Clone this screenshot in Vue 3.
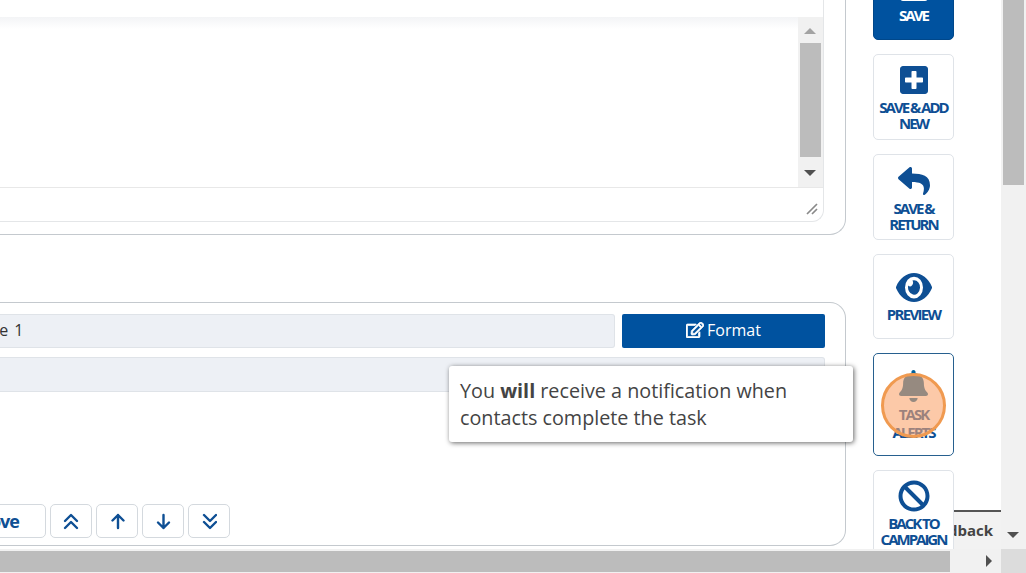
<template>
  <div class="page">
    <div class="viewport">
      <div class="content">
        <div class="main">
          <section class="panel panel-top">
            <div class="editor">
              <div class="toolbar"></div>
              <div class="editor-body">
                <div class="editor-text"></div>
                <div class="scrollbar">
                  <span class="tri tri-up tri-off"></span>
                  <div class="scroll-thumb"></div>
                  <span class="tri tri-down"></span>
                </div>
              </div>
              <div class="status">
                <svg class="grip" viewBox="0 0 12 12" width="12" height="12">
                  <path d="M1 11 11 1M6 11l5-5" stroke="#8a8a8a" stroke-width="1.7" fill="none" />
                </svg>
              </div>
            </div>
          </section>

          <section class="panel panel-bottom">
            <div class="name-row">
              <div class="field"><span class="field-text">Page 1</span></div>
              <button class="format-btn">
                <svg class="format-icon" viewBox="0 0 576 512" width="18" height="16">
                  <path :d="icons.edit" fill="#fff" stroke="#fff" stroke-width="22" />
                </svg>
                Format
              </button>
            </div>
            <div class="field field-wide"></div>
            <div class="move-row">
              <button class="move-btn text-btn">Remove</button>
              <button v-for="m in moves" :key="m.name" class="move-btn">
                <svg viewBox="0 0 16 18" width="16" height="18">
                  <path :d="m.d" fill="none" stroke="#0e4f94" stroke-width="2.4" stroke-linecap="round" stroke-linejoin="round" />
                </svg>
              </button>
            </div>
          </section>
        </div>

        <aside class="side">
          <button
            v-for="a in actions"
            :key="a.label"
            class="action"
            :class="a.cls"
          >
            <svg :viewBox="a.box" :width="a.w" :height="a.h" class="action-icon" preserveAspectRatio="none">
              <path :d="a.d" fill="currentColor" />
            </svg>
            <span class="action-label">{{ a.label }}</span>
          </button>
        </aside>
      </div>

      <div class="feedback">Feedback</div>

      <div class="vscroll">
        <div class="vthumb"></div>
        <span class="tri tri-down page-down"></span>
      </div>
    </div>

    <div class="hscroll">
      <div class="hthumb"></div>
      <span class="tri-right"></span>
      <div class="corner"></div>
    </div>

    <div class="tooltip">You <b>will</b> receive a notification when contacts complete the task</div>
    <div class="spot"></div>
  </div>
</template>

<script setup>
const icons = {
  edit: 'M402.3 344.9l32-32c5-5 13.7-1.5 13.7 5.7V464c0 26.5-21.5 48-48 48H48c-26.5 0-48-21.5-48-48V112c0-26.5 21.5-48 48-48h273.5c7.1 0 10.7 8.6 5.7 13.7l-32 32c-1.5 1.5-3.5 2.3-5.7 2.3H48v352h352V350.5c0-2.1.8-4.1 2.3-5.6zm156.6-201.8L296.3 405.7l-90.4 10c-26.2 2.9-48.5-19.2-45.6-45.6l10-90.4L432.9 17.1c22.9-22.9 59.9-22.9 82.7 0l43.2 43.2c22.9 22.9 22.9 60 .1 82.8zM460.1 174L402 115.9 216.2 301.8l-7.3 65.3 65.3-7.3L460.1 174zm64.8-79.7l-43.2-43.2c-4.1-4.1-10.8-4.1-14.8 0L436 82l58.1 58.1 30.9-30.9c4-4.2 4-10.8-.1-14.9z',
}

const moves = [
  { name: 'top', d: 'M2 9l6-6 6 6M2 16l6-6 6 6' },
  { name: 'up', d: 'M9 16V3M3.500 8.500 9 3l5.500 5.500' },
  { name: 'down', d: 'M8.500 3v13M3 10.500 8.500 16 14 10.500' },
  { name: 'bottom', d: 'M3 3l6 6 6-6M3 10l6 6 6-6' },
]

const actions = [
  {
    label: 'SAVE',
    cls: 'action-save',
    box: '0 0 448 512',
    w: 28,
    h: 32,
    d: 'M48 32h352c26.500 0 48 21.500 48 48v352c0 26.500-21.500 48-48 48H48c-26.500 0-48-21.500-48-48V80c0-26.500 21.500-48 48-48z',
  },
  {
    label: 'SAVE & ADD NEW',
    cls: 'action-add',
    box: '0 0 448 512',
    w: 28,
    h: 32,
    d: 'M400 32H48C21.500 32 0 53.500 0 80v352c0 26.500 21.500 48 48 48h352c26.500 0 48-21.500 48-48V80c0-26.500-21.500-48-48-48zm-32 252c0 6.600-5.400 12-12 12h-92v92c0 6.600-5.400 12-12 12h-56c-6.600 0-12-5.400-12-12v-92H92c-6.600 0-12-5.400-12-12v-56c0-6.600 5.400-12 12-12h92v-92c0-6.600 5.400-12 12-12h56c6.600 0 12 5.400 12 12v92h92c6.600 0 12 5.400 12 12v56z',
  },
  {
    label: 'SAVE & RETURN',
    cls: 'action-return',
    box: '0 0 512 512',
    w: 32,
    h: 32,
    d: 'M8.309 189.836L184.313 37.851C199.719 24.546 224 35.347 224 56.015v80.053c160.629 1.839 288 34.032 288 186.258 0 61.441-39.581 122.309-83.333 154.132-13.653 9.931-33.111-2.533-28.077-18.631 45.344-145.012-21.507-183.510-176.590-185.742V360c0 20.700-24.300 31.453-39.687 18.164l-176.004-152c-11.071-9.562-11.086-26.753 0-36.328z',
  },
  {
    label: 'PREVIEW',
    cls: 'action-preview',
    box: '0 64 576 384',
    w: 36,
    h: 29,
    d: 'M572.520 241.400C518.290 135.590 410.930 64 288 64S57.680 135.640 3.480 241.410a32.350 32.350 0 0 0 0 29.190C57.710 376.410 165.070 448 288 448s230.320-71.640 284.520-177.410a32.350 32.350 0 0 0 0-29.190zM288 400a144 144 0 1 1 144-144 143.930 143.930 0 0 1-144 144zm0-240a95.310 95.310 0 0 0-25.310 3.790 47.850 47.850 0 0 1-66.900 66.900A95.780 95.780 0 1 0 288 160z',
  },
  {
    label: 'TASK ALERTS',
    cls: 'action-active',
    box: '0 0 448 512',
    w: 29,
    h: 32,
    d: 'M224 512c35.320 0 63.970-28.650 63.970-64H160.030c0 35.350 28.650 64 63.970 64zm215.390-149.710c-19.320-20.760-55.470-51.990-55.470-154.290 0-77.700-54.480-139.900-127.940-155.160V32c0-17.670-14.320-32-31.980-32s-31.980 14.330-31.980 32v20.840C118.560 68.100 64.080 130.300 64.080 208c0 102.300-36.150 133.530-55.470 154.290-6 6.450-8.660 14.160-8.610 21.710.11 16.400 12.980 32 32.100 32h383.800c19.120 0 32-15.600 32.100-32 .05-7.550-2.610-15.270-8.610-21.710z',
  },
  {
    label: 'BACK TO CAMPAIGN',
    cls: 'action-back',
    box: '0 0 512 512',
    w: 32,
    h: 32,
    d: 'M256 8C119.034 8 8 119.033 8 256s111.034 248 248 248 248-111.034 248-248S392.967 8 256 8zm130.108 117.892c65.448 65.448 70 165.481 20.677 235.637L150.470 105.216c70.204-49.356 170.226-44.735 235.638 20.676zM125.892 386.108c-65.448-65.448-70-165.481-20.677-235.637L361.530 406.784c-70.203 49.356-170.226 44.736-235.638-20.676z',
  },
]
</script>

<style>
html,
body {
  margin: 0;
  overflow: hidden;
}
</style>

<style scoped>
.page {
  position: relative;
  width: 1026px;
  height: 573px;
  overflow: hidden;
  background: #fff;
  font-family: "Open Sans", sans-serif;
  display: flex;
  flex-direction: column;
}

button {
  font-family: inherit;
  cursor: pointer;
}

.viewport {
  position: relative;
  height: 549px;
  display: flex;
  overflow: hidden;
}

.content {
  width: 1001px;
  display: flex;
}

.main {
  width: 846px;
  flex: none;
}

.panel {
  box-sizing: border-box;
  background: #fff;
  border: 1px solid #c4c9ce;
  border-left: none;
}

.panel-top {
  height: 235px;
  border-top: none;
  border-bottom-right-radius: 16px;
  padding-right: 21px;
}

.editor {
  box-sizing: border-box;
  height: 222px;
  border-right: 1px solid #e4e6e8;
  border-bottom: 1px solid #e4e6e8;
  border-bottom-right-radius: 12px;
  display: flex;
  flex-direction: column;
}

.toolbar {
  box-sizing: border-box;
  height: 18px;
  flex: none;
  border-bottom: 1px solid #f0f0f0;
  margin-bottom: -1px;
}

.editor-body {
  height: 170px;
  flex: none;
  display: flex;
}

.editor-text {
  flex: 1;
  background: linear-gradient(#f3f4f6, #fff 12px);
}

.scrollbar {
  width: 25px;
  background: #f1f1f1;
  box-sizing: border-box;
  padding: 11px 3px 0 2px;
  display: flex;
  flex-direction: column;
  align-items: center;
}

.scroll-thumb {
  width: 21px;
  height: 114px;
  margin: 9px 0 13px;
  background: #bcbcbc;
}

.tri {
  display: block;
  width: 0;
  height: 0;
  border-left: 6px solid transparent;
  border-right: 6px solid transparent;
}

.tri-up {
  border-bottom: 6px solid #505050;
}

.tri-off {
  border-bottom-color: #a3a3a3;
}

.tri-down {
  border-top: 6px solid #505050;
}

.status {
  flex: 1;
  border-top: 1px solid #e8e8e8;
  display: flex;
  justify-content: flex-end;
  align-items: flex-end;
  padding: 0 5px 6px 0;
}

.panel-bottom {
  margin-top: 67px;
  height: 244px;
  border-top-right-radius: 16px;
  border-bottom-right-radius: 16px;
  padding: 11px 20px 0 0;
}

.name-row {
  display: flex;
  gap: 7px;
  margin-bottom: 9px;
}

.field {
  box-sizing: border-box;
  flex: 1;
  height: 34px;
  background: #edf0f5;
  border: 1px solid #dfe3e8;
  border-left: none;
  border-radius: 0 3px 3px 0;
  color: #333;
  font-size: 16px;
  line-height: 31px;
  overflow: hidden;
  white-space: nowrap;
}

.field-text {
  margin-left: -28px;
  word-spacing: 2px;
}

.field-wide {
  height: 35px;
}

.format-btn {
  width: 203px;
  height: 34px;
  flex: none;
  border: none;
  border-radius: 2px;
  background: #00529f;
  color: #fff;
  font-size: 16px;
  line-height: 30px;
  display: flex;
  align-items: center;
  justify-content: center;
  gap: 3px;
  padding: 0 0 2px;
}

.move-row {
  display: flex;
  gap: 4px;
  margin-top: 112px;
  margin-left: -50px;
}

.move-btn {
  box-sizing: border-box;
  width: 42px;
  height: 34px;
  background: #fff;
  border: 1px solid #d4d9de;
  border-radius: 5px;
  padding: 0;
  display: flex;
  align-items: center;
  justify-content: center;
}

.text-btn {
  width: 96px;
  justify-content: flex-end;
  padding-right: 26px;
  color: #0e4f94;
  font-size: 18px;
  font-weight: 700;
  letter-spacing: -1px;
}

.side {
  width: 81px;
  margin-left: 27px;
  flex: none;
  display: flex;
  flex-direction: column;
  gap: 14px;
  margin-top: -60px;
  position: relative;
  z-index: 2;
}

.action {
  box-sizing: border-box;
  width: 81px;
  flex: none;
  background: #fff;
  border: 1px solid #dfe3e8;
  border-radius: 5px;
  padding: 10px 0 0;
  color: #0e4f94;
  display: flex;
  flex-direction: column;
  align-items: center;
  gap: 3px;
}

.action-icon {
  display: block;
  flex: none;
}

.action-label {
  font-size: 15px;
  font-weight: 700;
  line-height: 16px;
  letter-spacing: -2px;
  font-kerning: none;
  text-align: center;
  width: 75px;
}

.action-save {
  height: 100px;
  background: #00529f;
  border-color: #00478a;
  color: #fff;
  padding-top: 30px;
  gap: 4px;
}

.action-add {
  height: 86px;
  padding-top: 9px;
}

.action-return {
  height: 86px;
}

.action-preview {
  height: 85px;
  padding-top: 18px;
  gap: 4px;
}

.action-preview .action-label {
  letter-spacing: -1.7px;
}

.action-active {
  height: 103px;
  border-color: #27608f;
  padding-top: 16px;
  gap: 3px;
}

.action-active .action-icon {
  color: #00619b;
}

.action-active .action-label {
  width: 60px;
  line-height: 18px;
}

.action-back {
  height: 100px;
  padding-top: 9px;
}

.feedback {
  position: absolute;
  left: 900px;
  top: 510px;
  width: 101px;
  height: 39px;
  box-sizing: border-box;
  background: #f2f2f2;
  border-top: 2px solid #555;
  padding: 7px 8px 0 0;
  text-align: right;
  font-size: 15px;
  font-weight: 700;
  line-height: 22px;
  color: #444;
  z-index: 1;
}

.vscroll {
  position: relative;
  width: 25px;
  background: #f1f1f1;
}

.vthumb {
  width: 21px;
  height: 185px;
  margin-left: 2px;
  background: #bcbcbc;
}

.page-down {
  position: absolute;
  left: 6px;
  top: 532px;
}

.hscroll {
  position: relative;
  height: 24px;
  background: #f1f1f1;
  display: flex;
  align-items: center;
}

.hthumb {
  width: 950px;
  height: 21px;
  background: #bcbcbc;
}

.tri-right {
  width: 0;
  height: 0;
  margin-left: 36px;
  border-top: 6px solid transparent;
  border-bottom: 6px solid transparent;
  border-left: 6px solid #505050;
}

.corner {
  position: absolute;
  right: 0;
  top: 0;
  width: 25px;
  height: 24px;
  background: #dcdcdc;
}

.tooltip {
  position: absolute;
  left: 449px;
  top: 366px;
  box-sizing: border-box;
  width: 404px;
  height: 76px;
  padding: 11px 11px;
  background: #fff;
  border-radius: 3px;
  box-shadow: 1px 1px 5px rgba(0, 0, 0, 0.6);
  color: #444;
  font-size: 19.75px;
  line-height: 27px;
  z-index: 3;
}

.spot {
  position: absolute;
  left: 881px;
  top: 373px;
  box-sizing: border-box;
  width: 65px;
  height: 65px;
  border-radius: 50%;
  background: rgba(250, 165, 110, 0.6);
  border: 3px solid #f09a50;
  z-index: 4;
}
</style>
